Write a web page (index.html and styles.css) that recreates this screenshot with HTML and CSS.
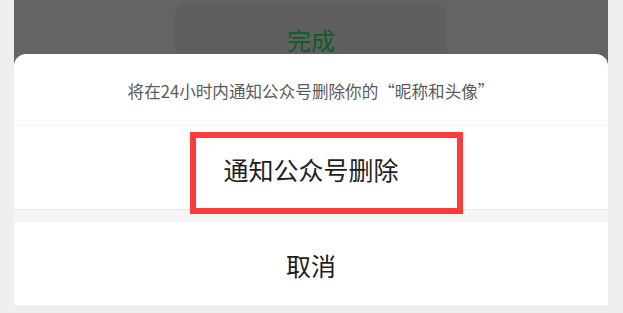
FILE: index.html
```html
<!DOCTYPE html>
<html lang="zh-CN">
<head>
<meta charset="utf-8">
<link rel="stylesheet" href="styles.css">
</head>
<body>
<div class="phone">
  <div class="backdrop">
    <div class="done-card"><span class="done">完成</span></div>
  </div>
  <div class="sheet">
    <div class="title">将在24小时内通知公众号删除你的“昵称和头像”</div>
    <div class="option">通知公众号删除</div>
    <div class="gap"></div>
    <div class="option cancel">取消</div>
  </div>
  <div class="footer"></div>
  <div class="highlight"></div>
</div>
</body>
</html>
```
FILE: styles.css
```css
html, body {
  margin: 0;
  padding: 0;
  background: #efefef;
  font-family: "Noto Sans CJK SC", "Noto Sans", sans-serif;
}
body {
  width: 623px;
  height: 313px;
  overflow: hidden;
}
.phone {
  position: relative;
  margin: 0 15px 0 14px;
  background: #646464;
  display: flex;
  flex-direction: column;
}
.backdrop {
  height: 54px;
  padding-top: 3px;
  box-sizing: border-box;
  display: flex;
  justify-content: center;
}
.done-card {
  width: 272px;
  height: 51px;
  background: #5f5f5f;
  border-radius: 12px 12px 0 0;
  display: flex;
  justify-content: center;
}
.done {
  margin-top: 24px;
  font-size: 24px;
  line-height: 26px;
  height: 26px;
  color: #0c5c27;
}
.sheet {
  background: #ffffff;
  border-radius: 12px 12px 0 0;
  display: flex;
  flex-direction: column;
}
.title {
  height: 72px;
  border-bottom: 1px solid #f6f6f6;
  box-sizing: border-box;
  display: flex;
  align-items: center;
  justify-content: center;
  font-size: 16.6px;
  color: #5a5a5a;
  padding-top: 3px;
}
.option {
  height: 84px;
  border-bottom: 1px solid #e9e9e9;
  box-sizing: border-box;
  display: flex;
  align-items: center;
  justify-content: center;
  font-size: 25px;
  color: #1e1e1e;
  padding-top: 3px;
}
.gap {
  height: 12px;
  background: #f5f5f5;
}
.cancel {
  height: 83px;
  border-bottom: none;
  padding-top: 2px;
}
.footer {
  height: 8px;
  background: #efefef;
}
.highlight {
  position: absolute;
  left: 176px;
  top: 132px;
  width: 273px;
  height: 82px;
  box-sizing: border-box;
  border: 6px solid #ff3a3a;
}
```
